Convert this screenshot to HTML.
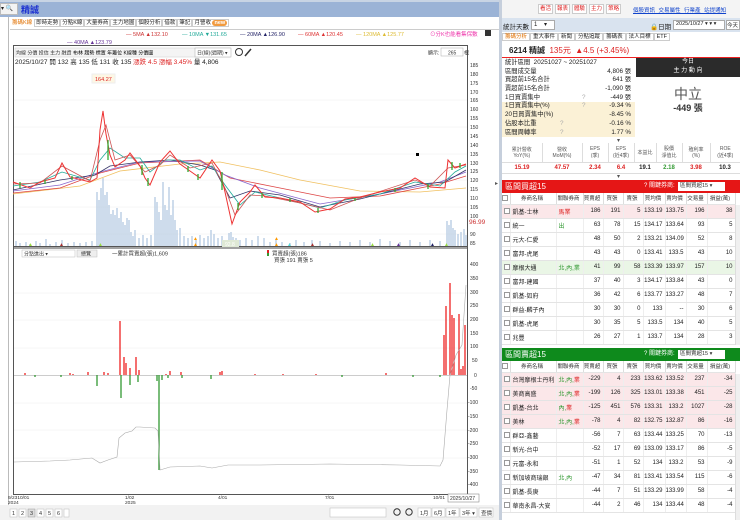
<!DOCTYPE html>
<html><head><meta charset="utf-8">
<style>
*{margin:0;padding:0;box-sizing:border-box}
body{width:740px;height:520px;overflow:hidden;background:#fff;font-family:"Liberation Sans","Noto Sans CJK TC",sans-serif;font-size:7px;color:#222;position:relative}
.a{position:absolute}
table{border-collapse:collapse;table-layout:fixed}
.rt td{height:14px;border-bottom:1px solid #e4e4e4;border-right:1px solid #eee;text-align:right;padding-right:2px;font-size:6px;white-space:nowrap;overflow:hidden}
.rt td.l{text-align:left;padding-left:2px}
.rt tr.h td{height:11px;text-align:center;background:#fff;font-size:5.5px;color:#333;border-right:1px solid #ddd}
.cb{display:inline-block;width:6px;height:6px;border:1px solid #999;background:#fff;vertical-align:middle}
.pk td{background:#fbe7e9}
.gn td{background:#eaf6e6}
.st div{height:8.7px;line-height:8.7px;font-size:6.3px;position:relative;padding-left:3px;white-space:nowrap}
.st span{position:absolute;right:4px}
.btn{display:inline-block;border:1px solid #ccc;background:#fff;padding:0 1px;margin-right:2px;color:#d22;height:10px;line-height:9px;font-size:5.5px}
</style></head><body>

<!-- LEFT -->
<div class="a" style="left:0;top:0;width:500px;height:17px;background:#9bb3d6;border-top:2px solid #c8d4e4"></div>
<div class="a" style="left:0;top:3px;width:18px;height:12px;background:#f3f3f3;border:1px solid #bbb;font-size:6px;line-height:10px">▾ 🔍</div>
<div class="a" style="left:21px;top:3px;font-size:9px;font-weight:bold;color:#1a2fd0">精誠</div>
<div class="a" style="left:0;top:17px;width:9px;height:503px;background:#fff;border-right:1px solid #bbb"></div>
<div class="a" style="left:10px;top:18px;width:490px;height:12px;border-bottom:1px solid #ccc;font-size:5.5px;line-height:11px;white-space:nowrap">
<span style="color:#e07000;padding:0 2px">籌碼K線</span><span style="border:1px solid #ccc;padding:0 1px">即時走勢</span><span style="border:1px solid #ccc;padding:0 1px">分點K線</span><span style="border:1px solid #ccc;padding:0 1px">大量券商</span><span style="border:1px solid #ccc;padding:0 1px">主力地圖</span><span style="border:1px solid #ccc;padding:0 1px">個股分析</span><span style="border:1px solid #ccc;padding:0 1px">借款</span><span style="border:1px solid #ccc;padding:0 1px">筆記</span><span style="border:1px solid #ccc;padding:0 1px">月營收 <b style="background:#f19a3e;color:#fff;border-radius:4px;padding:0 2px">new</b></span></div>

<svg class="a" style="left:0;top:30px" width="500" height="490" viewBox="0 30 500 490" font-family="Liberation Sans,Noto Sans CJK TC,sans-serif">
<g font-size="5.5">
<text x="126" y="36" fill="#c33">— 5MA ▲132.10</text>
<text x="182" y="36" fill="#2a9">— 10MA ▼131.65</text>
<text x="240" y="36" fill="#226">— 20MA ▲126.90</text>
<text x="298" y="36" fill="#d33">— 60MA ▲120.45</text>
<text x="356" y="36" fill="#db3">— 120MA ▲125.77</text>
<text x="430" y="36" fill="#e3a">⊙分K也能看集保數</text>
<text x="67" y="44" fill="#639">— 40MA ▲123.79</text>
</g>
<rect x="485" y="30" width="6" height="6" fill="#333"/>
<rect x="13.5" y="45.5" width="454" height="449" fill="none" stroke="#555"/>
<line x1="467.5" y1="46" x2="467.5" y2="494" stroke="#555"/>
<line x1="14" y1="248" x2="467" y2="248" stroke="#444"/>
<g font-size="5" fill="#333">
<rect x="15" y="48" width="215" height="9" fill="#f4f4f4" stroke="#ccc" stroke-width=".5"/>
<text x="16" y="54.5">均線  分價  投信  主力  融資  <tspan fill="#000">布林  趨勢  標置  年籌位  K線種  分價圖</tspan></text>
<rect x="195" y="48" width="36" height="9" fill="#fff" stroke="#aaa" stroke-width=".5"/>
<text x="197" y="54.5">日(線)(週期) ▾</text>
<circle cx="239" cy="52" r="3.5" fill="none" stroke="#333"/>
<path d="M245 56 L251 49" stroke="#333" stroke-width="1.5"/>
<text x="428" y="54.5">顯示:</text>
<rect x="441" y="48" width="22" height="8" fill="#fff" stroke="#aaa" stroke-width=".5"/>
<text x="448" y="54.5">265</text>
<text x="464" y="54.5">根</text>
</g>
<text x="15" y="64" font-size="6.5" fill="#222">2025/10/27 開 132  高 135  低 131  收 135   <tspan fill="#d22">漲跌 4.5  漲幅 3.45%</tspan>  量 4,806</text>
<rect x="92" y="74" width="23" height="9" fill="#fdf7e4" stroke="#eee"/>
<text x="95" y="81" font-size="5.5" fill="#d22">164.27</text>
<g stroke="#eee" stroke-width=".5">
<line x1="14" y1="100" x2="467" y2="100"/><line x1="14" y1="127" x2="467" y2="127"/><line x1="14" y1="154" x2="467" y2="154"/><line x1="14" y1="180" x2="467" y2="180"/><line x1="14" y1="207" x2="467" y2="207"/><line x1="14" y1="234" x2="467" y2="234"/>
</g>
<path stroke="#b9cde3" stroke-width="1.4" d="M16 246V241M20 246V243M26 246V242M30 246V244M36 246V241M40 246V243M46 246V239M50 246V244M56 246V242M62 246V240M68 246V243M74 246V242M80 246V243M86 246V242M92 246V241M97 246V192M99 246V200M101 246V188M103 246V178M105 246V195M107 246V192M109 246V205M111 246V214M113 246V210M115 246V215M117 246V208M119 246V218M121 246V212M123 246V222M125 246V225M127 246V218M129 246V220M131 246V232M133 246V236M135 246V230M139 246V238M143 246V235M147 246V238M151 246V235M155 246V197M157 246V202M159 246V212M161 246V220M163 246V182M165 246V205M167 246V210M169 246V187M171 246V215M173 246V200M175 246V220M177 246V230M180 246V228M184 246V236M188 246V238M192 246V236M196 246V240M200 246V235M204 246V238M208 246V236M211 246V230M214 246V234M218 246V238M222 246V236M226 246V240M229 246V233M231 246V232M233 246V237M236 246V238M240 246V240M246 246V238M252 246V240M258 246V236M264 246V238M270 246V242M276 246V240M282 246V242M290 246V243M296 246V240M304 246V242M312 246V240M320 246V241M330 246V243M340 246V241M350 246V242M360 246V240M370 246V242M380 246V239M390 246V241M400 246V242M410 246V240M420 246V242M430 246V240M440 246V241M447 246V221M449 246V225M451 246V220M453 246V228M455 246V230M458 246V234M461 246V232M464 246V229M466 246V235"/>
<line x1="14" y1="246.5" x2="467" y2="246.5" stroke="#555"/>
<g fill="none" stroke-width=".8">
<polyline stroke="#f0c060" points="13,194 80,186 120,171 180,164 220,162 260,170 300,180 360,191 420,192 466,188"/>
<polyline stroke="#d44" points="13,193 60,188 100,173 140,163 200,160 230,178 270,186 330,198 380,196 440,184 466,176"/>
<polyline stroke="#86c" points="13,191 60,185 100,172 140,162 200,161 225,175 260,188 320,204 380,194 440,182 466,172"/>
<polyline stroke="#336" points="13,190 60,180 95,175 110,166 140,162 170,160 200,165 215,170 230,198 250,191 280,195 320,207 360,199 420,184 445,182 466,170"/>
<polyline stroke="#2a9" points="13,186 40,182 62,172 90,180 100,160 110,148 125,158 140,158 150,172 165,160 180,160 200,170 212,166 225,185 240,205 255,192 280,198 320,208 345,200 380,194 415,182 440,186 455,172 466,166"/>
<polyline stroke="#c55" points="13,184 40,183 62,166 90,181 100,140 106,125 115,160 130,155 145,172 160,165 170,155 190,168 212,163 225,188 235,215 250,195 265,196 300,203 330,210 360,198 415,180 430,186 448,168 466,165"/>
</g>
<polyline fill="none" stroke="#e33" stroke-width="1" points="13,182 30,188 40,182 55,178 62,163 70,177 90,182 97,178 100,130 103,111 106,134 110,155 115,167 125,160 130,153 140,166 145,178 150,185 160,162 170,151 180,164 190,171 200,178 212,160 220,171 225,192 232,224 240,202 250,192 255,185 265,197 280,198 300,202 315,212 330,209 345,199 360,197 380,192 400,188 415,178 430,187 445,188 448,160 455,168 466,164"/>
<path stroke="#3a3" stroke-width="1.3" d="M20 182V188M45 180V184M72 176V180M108 140V160M142 165V175M148 178V186M188 166V172M198 174V180M222 172V190M238 203V210M262 193V198M290 198V202M318 208V213M355 198V201M395 188V192M428 184V189M452 162V170M460 163V168"/>
<rect x="416" y="153" width="3" height="3" fill="#000"/>
<g font-size="5"><text x="28" y="246" fill="#9d4">▲</text><text x="59" y="246" fill="#a33">▲</text><text x="98" y="246" fill="#9d4">▲</text><text x="193" y="240" fill="#f90">▲</text><text x="193" y="246" fill="#f90">▲</text><text x="274" y="240" fill="#f90">▲</text><text x="274" y="246" fill="#f90">▲</text><text x="287" y="246" fill="#5dd">▲</text><text x="310" y="246" fill="#a33">▲</text><text x="370" y="246" fill="#9d4">▲</text><text x="396" y="246" fill="#639">▲</text><text x="430" y="246" fill="#226">▲</text><text x="444" y="246" fill="#9d4">▲</text></g>
<rect x="222" y="240" width="17" height="7" fill="#dfe9d5"/><text x="225" y="246" font-size="5" fill="#fff">92.8</text>
<g font-size="5" fill="#333">
<text x="470" y="67">185</text><text x="470" y="76">180</text><text x="470" y="85">175</text><text x="470" y="94">170</text><text x="470" y="102">165</text><text x="470" y="111">160</text><text x="470" y="120">155</text><text x="470" y="129">150</text><text x="470" y="138">145</text><text x="470" y="147">140</text><text x="470" y="156">135</text><text x="470" y="165">130</text><text x="470" y="173">125</text><text x="470" y="182">120</text><text x="470" y="191">115</text><text x="470" y="200">110</text><text x="470" y="209">105</text><text x="470" y="218">100</text><text x="470" y="236">90</text><text x="470" y="245">85</text>
</g>
<text x="469" y="224" font-size="6.5" fill="#c33">96.99</text>
<rect x="22" y="250" width="53" height="7" fill="#fff" stroke="#bbb" stroke-width=".5"/>
<text x="24" y="255.5" font-size="5" fill="#333">分點進出              ▾</text>
<rect x="77" y="250" width="20" height="7" fill="#eee" stroke="#bbb" stroke-width=".5"/>
<text x="81" y="255.5" font-size="5" fill="#333">總覽</text>
<text x="112" y="255.5" font-size="5.5" fill="#333">一累計買賣超(張)1,609</text>
<rect x="267" y="250" width="2" height="3" fill="#d22"/><rect x="267" y="253" width="2" height="3" fill="#393"/>
<text x="272" y="255.5" font-size="5.5" fill="#333">買賣超(張)186</text>
<text x="274" y="262" font-size="5.5" fill="#333">買張 191 賣張 5</text>
<g stroke="#eee" stroke-width=".5">
<line x1="14" y1="293" x2="467" y2="293"/><line x1="14" y1="320" x2="467" y2="320"/><line x1="14" y1="348" x2="467" y2="348"/><line x1="14" y1="403" x2="467" y2="403"/><line x1="14" y1="430" x2="467" y2="430"/><line x1="14" y1="458" x2="467" y2="458"/>
</g>
<line x1="14" y1="375.5" x2="467" y2="375.5" stroke="#999" stroke-width=".6"/>
<path stroke="#e22" stroke-width="1.3" d="M25 375V373M70 375V373M73 375V374M88 375V372M104 375V372M108 375V373M120 375V321M124 375V357M126 375V363M130 375V368M136 375V357M139 375V370M166 375V374M170 375V371M181 375V372M220 375V372M222 375V371M255 375V374M283 375V374M316 375V374M386 375V373M444 375V335M446 375V306M450 375V283M452 375V315M454 375V318M459 375V314M461 375V369M463 375V366M465 375V325"/>
<path stroke="#393" stroke-width="1.3" d="M35 375V377M61 375V377M97 375V386M121 375V398M130 375V385M138 375V382M157 375V381M159 375V470M162 375V380M168 375V378M182 375V378M211 375V379M342 375V377M413 375V377M440 375V377"/>
<polyline fill="none" stroke="#aaa" stroke-width=".6" points="14,462 50,461 70,460 92,458 100,463 108,460 117,457 119,438 125,433 132,431 136,427 140,427 155,428 158,431 160,470 170,467 200,466 212,468 228,465 260,465 330,464 400,465 440,466 443,460 447,410 450,375 456,355 462,345 466,285"/>
<g font-size="5" fill="#333">
<text x="470" y="266">400</text><text x="470" y="280">350</text><text x="470" y="294">300</text><text x="470" y="307">250</text><text x="470" y="321">200</text><text x="470" y="335">150</text><text x="470" y="348">100</text><text x="472" y="362">50</text><text x="474" y="377">0</text><text x="470" y="390">-50</text><text x="468" y="404">-100</text><text x="468" y="418">-150</text><text x="468" y="432">-200</text><text x="468" y="445">-250</text><text x="468" y="459">-300</text><text x="468" y="473">-350</text><text x="468" y="486">-400</text>
</g>
<g font-size="4.8" fill="#333">
<text x="8" y="499">9/2310/01</text><text x="8" y="504">2024</text>
<text x="125" y="499">1/02</text><text x="125" y="504">2025</text>
<text x="218" y="499">4/01</text><text x="325" y="499">7/01</text><text x="433" y="499">10/01</text>
</g>
<rect x="448" y="494" width="31" height="8" fill="#fff" stroke="#777" stroke-width=".5"/>
<text x="450" y="500" font-size="5" fill="#333">2025/10/27</text>
<rect x="0" y="505" width="500" height="15" fill="#f2f2f2"/>
<g font-size="5.5" fill="#333">
<rect x="10" y="509" width="7" height="8" fill="#fff" stroke="#bbb" stroke-width=".5"/><text x="12" y="515">1</text>
<rect x="19" y="509" width="7" height="8" fill="#fff" stroke="#bbb" stroke-width=".5"/><text x="21" y="515">2</text>
<rect x="28" y="509" width="7" height="8" fill="#ddd" stroke="#999" stroke-width=".5"/><text x="30" y="515">3</text>
<rect x="37" y="509" width="7" height="8" fill="#fff" stroke="#bbb" stroke-width=".5"/><text x="39" y="515">4</text>
<rect x="46" y="509" width="7" height="8" fill="#fff" stroke="#bbb" stroke-width=".5"/><text x="48" y="515">5</text>
<rect x="55" y="509" width="7" height="8" fill="#fff" stroke="#bbb" stroke-width=".5"/><text x="57" y="515">6</text>
<rect x="64" y="509" width="5" height="8" fill="#fff" stroke="#bbb" stroke-width=".5"/>
<rect x="330" y="508" width="56" height="9" fill="#fff" stroke="#bbb" stroke-width=".5"/>
<circle cx="397" cy="512" r="3.2" fill="none" stroke="#333"/><circle cx="409" cy="512" r="3.2" fill="none" stroke="#333"/>
<rect x="418" y="508" width="13" height="9" fill="#fff" stroke="#bbb" stroke-width=".5"/><text x="420" y="515">1月</text>
<rect x="432" y="508" width="13" height="9" fill="#fff" stroke="#bbb" stroke-width=".5"/><text x="434" y="515">6月</text>
<rect x="446" y="508" width="13" height="9" fill="#fff" stroke="#bbb" stroke-width=".5"/><text x="448" y="515">1年</text>
<rect x="460" y="508" width="17" height="9" fill="#fff" stroke="#bbb" stroke-width=".5"/><text x="462" y="515">3年 ▾</text>
<rect x="479" y="508" width="14" height="9" fill="#fff" stroke="#bbb" stroke-width=".5"/><text x="481" y="515">查價</text>
</g>
<text x="495" y="185" font-size="6" fill="#555">▸</text>
</svg>
<div class="a" style="left:499px;top:0;width:3px;height:520px;background:#c6cfdc"></div>

<!-- RIGHT -->
<div class="a" style="left:502px;top:0;width:238px;height:18px;background:#f4f4f4"></div>
<div class="a" style="left:538px;top:4px;white-space:nowrap"><span class="btn">看活</span><span class="btn">報表</span><span class="btn">體驗</span><span class="btn">主力</span><span class="btn">策略</span></div>
<div class="a" style="left:633px;top:6px;font-size:5.5px;color:#14c;text-decoration:underline;word-spacing:2px;white-space:nowrap">個股資訊 交易屬性 行業產 站提通知</div>
<div class="a" style="left:502px;top:18px;width:238px;height:14px;background:#d9e3ef"></div>
<div class="a" style="left:503px;top:21px;font-size:6.5px">統計天數</div>
<div class="a" style="left:531px;top:20px;width:24px;height:10px;background:#fff;border:1px solid #aaa;font-size:6px;padding-left:2px">1&nbsp;&nbsp;&nbsp;&nbsp;▾</div>
<div class="a" style="left:650px;top:21px;font-size:6.5px">🔒日期</div>
<div class="a" style="left:673px;top:20px;width:52px;height:10px;background:#fff;border:1px solid #aaa;font-size:5.5px;padding-left:2px;white-space:nowrap;overflow:hidden">2025/10/27 ▾ ▾ ▾</div>
<div class="a" style="left:726px;top:20px;width:14px;height:10px;background:#fff;border:1px solid #aaa;font-size:5.5px;overflow:hidden">今天</div>
<div class="a" style="left:502px;top:33px;width:238px;height:10px;font-size:5.5px;white-space:nowrap;line-height:9px"><span style="color:#e07000;border:1px solid #ccc;background:#fff;padding:0 2px">籌碼分析</span><span style="border:1px solid #ccc;padding:0 2px">重大事件</span><span style="border:1px solid #ccc;padding:0 2px">新聞</span><span style="border:1px solid #ccc;padding:0 2px">分點追蹤</span><span style="border:1px solid #ccc;padding:0 2px">籌碼表</span><span style="border:1px solid #ccc;padding:0 2px">法人目標</span><span style="border:1px solid #ccc;padding:0 2px">ETF</span></div>
<div class="a" style="left:502px;top:44px;width:238px;height:14px;border-bottom:1.5px solid #e22;font-size:8px;line-height:13px;padding-left:7px;white-space:nowrap"><b>6214 精誠</b>&nbsp;&nbsp;<span style="color:#d22">135元&nbsp;&nbsp;▲4.5 (+3.45%)</span></div>
<div class="a st" style="left:502px;top:59px;width:133px">
<div>統計區間 &nbsp;20251027 ~ 20251027</div>
<div>區間成交量<span>4,806 張</span></div>
<div>買超前15名合計<span>641 張</span></div>
<div>賣超前15名合計<span>-1,090 張</span></div>
<div>1日買賣集中<b style="position:absolute;left:80px;color:#aaa;font-weight:normal">?</b><span>-449 張</span></div>
<div style="background:#fbf1d6">1日買賣集中(%)<b style="position:absolute;left:80px;color:#aaa;font-weight:normal">?</b><span>-9.34 %</span></div>
<div style="background:#fbf1d6">20日買賣集中(%)<span>-8.45 %</span></div>
<div style="background:#fbf1d6">佔股本比重<b style="position:absolute;left:58px;color:#aaa;font-weight:normal">?</b><span>-0.16 %</span></div>
<div style="background:#fbf1d6">區間周轉率<b style="position:absolute;left:58px;color:#aaa;font-weight:normal">?</b><span>1.77 %</span></div>
</div>
<div class="a" style="left:636px;top:58px;width:104px;height:19px;background:#2b2b2b;color:#fff;text-align:center;font-size:6px;line-height:9px">今日<br>主 力 動 向</div>
<div class="a" style="left:636px;top:84px;width:104px;text-align:center;font-size:14px;color:#555">中立</div>
<div class="a" style="left:636px;top:101px;width:104px;text-align:center;font-size:9px;font-weight:bold;color:#333">-449 張</div>
<div class="a" style="left:617px;top:137px;font-size:6px;color:#555">▾</div>
<table class="a" style="left:502px;top:143px;width:238px;font-size:5px;text-align:center">
<tr style="height:19px;color:#555;border-bottom:1px solid #ddd"><td style="width:40px;border-right:1px solid #ddd">累計營收<br>YoY(%)</td><td style="width:40px;border-right:1px solid #ddd">營收<br>MoM(%)</td><td style="width:26px;border-right:1px solid #ddd">EPS<br>(季)</td><td style="width:26px;border-right:1px solid #ddd">EPS<br>(近4季)</td><td style="width:22px;border-right:1px solid #ddd">本益比</td><td style="width:26px;border-right:1px solid #ddd">股價<br>淨值比</td><td style="width:28px;border-right:1px solid #ddd">殖利率<br>(%)</td><td>ROE<br>(近4季)</td></tr>
<tr style="height:11px;font-weight:bold;font-size:6px;border-bottom:1px solid #ddd"><td style="color:#d22">15.19</td><td style="color:#d22">47.57</td><td style="color:#d22">2.34</td><td style="color:#d22">6.4</td><td>19.1</td><td style="color:#393">2.18</td><td style="color:#d22">3.98</td><td>10.3</td></tr>
</table>
<div class="a" style="left:617px;top:173px;font-size:6px;color:#555">▾</div>

<div class="a" style="left:502px;top:180px;width:238px;height:13px;background:#e51616;color:#fff;font-size:8px;line-height:13px;padding-left:3px">區間買超15<span style="position:absolute;left:142px;font-size:6px">? 關鍵券商:</span><span style="position:absolute;left:176px;top:2px;width:47px;height:9px;background:#fff;color:#333;font-size:5.5px;line-height:9px;padding-left:2px">區間買超15 ▾</span></div>
<table class="a rt" style="left:502px;top:193px;width:233px">
<colgroup><col style="width:8px"><col style="width:46px"><col style="width:27px"><col style="width:20px"><col style="width:20px"><col style="width:20px"><col style="width:22px"><col style="width:21px"><col style="width:21px"><col style="width:28px"></colgroup>
<tr class="h"><td><span class="cb"></span></td><td>券商名稱</td><td>關聯券商</td><td>買賣超</td><td>買張</td><td>賣張</td><td>買均價</td><td>賣均價</td><td>交易量</td><td>損益(萬)</td></tr>
<tr class="pk"><td class="l"><span class="cb"></span></td><td class="l">凱基-士林</td><td class="l" style="color:#d22">馬業</td><td>186</td><td>191</td><td>5</td><td>133.19</td><td>133.75</td><td>196</td><td>38</td></tr>
<tr><td class="l"><span class="cb"></span></td><td class="l">統一</td><td class="l" style="color:#393">出</td><td>63</td><td>78</td><td>15</td><td>134.17</td><td>133.64</td><td>93</td><td>5</td></tr>
<tr><td class="l"><span class="cb"></span></td><td class="l">元大-仁愛</td><td></td><td>48</td><td>50</td><td>2</td><td>133.21</td><td>134.09</td><td>52</td><td>8</td></tr>
<tr><td class="l"><span class="cb"></span></td><td class="l">富邦-虎尾</td><td></td><td>43</td><td>43</td><td>0</td><td>133.41</td><td>133.5</td><td>43</td><td>10</td></tr>
<tr class="gn"><td class="l"><span class="cb"></span></td><td class="l">摩根大通</td><td class="l" style="color:#393">北,內,業</td><td>41</td><td>99</td><td>58</td><td>133.39</td><td>133.97</td><td>157</td><td>10</td></tr>
<tr><td class="l"><span class="cb"></span></td><td class="l">富邦-建國</td><td></td><td>37</td><td>40</td><td>3</td><td>134.17</td><td>133.84</td><td>43</td><td>0</td></tr>
<tr><td class="l"><span class="cb"></span></td><td class="l">凱基-如府</td><td></td><td>36</td><td>42</td><td>6</td><td>133.77</td><td>133.27</td><td>48</td><td>7</td></tr>
<tr><td class="l"><span class="cb"></span></td><td class="l">群益-麟子內</td><td></td><td>30</td><td>30</td><td>0</td><td>133</td><td>--</td><td>30</td><td>6</td></tr>
<tr><td class="l"><span class="cb"></span></td><td class="l">凱基-虎尾</td><td></td><td>30</td><td>35</td><td>5</td><td>133.5</td><td>134</td><td>40</td><td>5</td></tr>
<tr><td class="l"><span class="cb"></span></td><td class="l">兆豐</td><td></td><td>26</td><td>27</td><td>1</td><td>133.7</td><td>134</td><td>28</td><td>3</td></tr>
</table>
<div class="a" style="left:735px;top:205px;width:5px;height:140px;background:#f0f0f0;border-left:1px solid #ddd"></div>

<div class="a" style="left:502px;top:348px;width:238px;height:13px;background:#0e8a1c;color:#fff;font-size:8px;line-height:13px;padding-left:3px">區間賣超15<span style="position:absolute;left:142px;font-size:6px">? 關鍵券商:</span><span style="position:absolute;left:176px;top:2px;width:47px;height:9px;background:#fff;color:#333;font-size:5.5px;line-height:9px;padding-left:2px">區間賣超15 ▾</span></div>
<table class="a rt" style="left:502px;top:361px;width:233px">
<colgroup><col style="width:8px"><col style="width:46px"><col style="width:27px"><col style="width:20px"><col style="width:20px"><col style="width:20px"><col style="width:22px"><col style="width:21px"><col style="width:21px"><col style="width:28px"></colgroup>
<tr class="h"><td><span class="cb"></span></td><td>券商名稱</td><td>關聯券商</td><td>買賣超</td><td>買張</td><td>賣張</td><td>買均價</td><td>賣均價</td><td>交易量</td><td>損益(萬)</td></tr>
<tr class="pk"><td class="l"><span class="cb"></span></td><td class="l">台灣摩根士丹利</td><td class="l"><span style="color:#393">北,內,</span><span style="color:#d22">業</span></td><td>-229</td><td>4</td><td>233</td><td>133.62</td><td>133.52</td><td>237</td><td>-34</td></tr>
<tr class="pk"><td class="l"><span class="cb"></span></td><td class="l">美商高盛</td><td class="l"><span style="color:#393">北,內,</span><span style="color:#d22">業</span></td><td>-199</td><td>126</td><td>325</td><td>133.01</td><td>133.38</td><td>451</td><td>-25</td></tr>
<tr class="pk"><td class="l"><span class="cb"></span></td><td class="l">凱基-台北</td><td class="l"><span style="color:#393">內,</span><span style="color:#d22">業</span></td><td>-125</td><td>451</td><td>576</td><td>133.31</td><td>133.2</td><td>1027</td><td>-28</td></tr>
<tr class="pk"><td class="l"><span class="cb"></span></td><td class="l">美林</td><td class="l"><span style="color:#393">北,內,</span><span style="color:#d22">業</span></td><td>-78</td><td>4</td><td>82</td><td>132.75</td><td>132.87</td><td>86</td><td>-16</td></tr>
<tr><td class="l"><span class="cb"></span></td><td class="l">群亞-鑫藝</td><td></td><td>-56</td><td>7</td><td>63</td><td>133.44</td><td>133.25</td><td>70</td><td>-13</td></tr>
<tr><td class="l"><span class="cb"></span></td><td class="l">新光-台中</td><td></td><td>-52</td><td>17</td><td>69</td><td>133.09</td><td>133.17</td><td>86</td><td>-5</td></tr>
<tr><td class="l"><span class="cb"></span></td><td class="l">元富-永和</td><td></td><td>-51</td><td>1</td><td>52</td><td>134</td><td>133.2</td><td>53</td><td>-9</td></tr>
<tr><td class="l"><span class="cb"></span></td><td class="l">新加坡商瑞銀</td><td class="l" style="color:#393">北,內</td><td>-47</td><td>34</td><td>81</td><td>133.41</td><td>133.54</td><td>115</td><td>-6</td></tr>
<tr><td class="l"><span class="cb"></span></td><td class="l">凱基-長庚</td><td></td><td>-44</td><td>7</td><td>51</td><td>133.29</td><td>133.99</td><td>58</td><td>-4</td></tr>
<tr><td class="l"><span class="cb"></span></td><td class="l">華南永昌-大安</td><td></td><td>-44</td><td>2</td><td>46</td><td>134</td><td>133.44</td><td>48</td><td>-4</td></tr>
</table>
<div class="a" style="left:735px;top:374px;width:5px;height:146px;background:#f0f0f0;border-left:1px solid #ddd"></div>
</body></html>
